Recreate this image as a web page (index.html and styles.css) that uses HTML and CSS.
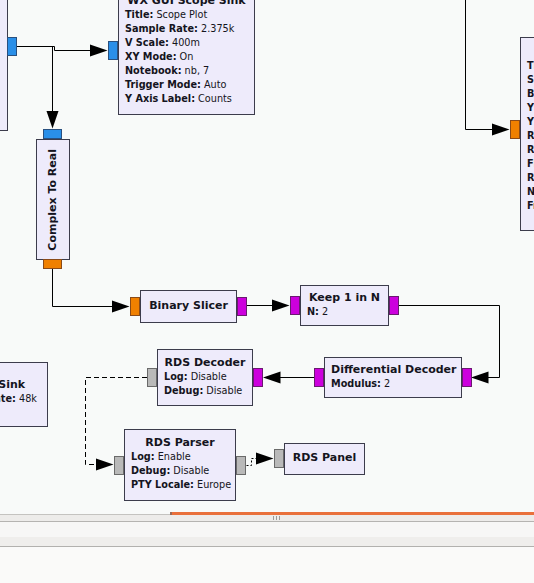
FILE: index.html
```html
<!DOCTYPE html>
<html>
<head>
<meta charset="utf-8">
<link rel="stylesheet" href="styles.css">
</head>
<body>
<div class="canvas">
  <svg class="wires" width="534" height="512" viewBox="0 0 534 512">
    <g fill="none" stroke="#000" stroke-width="1">
      <path d="M17 46.5 H54.5 V50.5 H95"/>
      <path d="M52.5 46.5 V115"/>
      <path d="M52.5 269 V306.5 H115"/>
      <path d="M246 305.5 H275"/>
      <path d="M398 305.5 H499.5 V377.5 H485"/>
      <path d="M314 377.5 H278"/>
      <path d="M465.5 0 V129.5 H495"/>
      <path class="dash" d="M147 377.5 H85.5 V464.5 H99"/>
      <path class="dash2" d="M246.5 465.5 H251.5 V458.5 H258"/>
    </g>
    <g fill="#000">
      <polygon points="90,44.5 90,56.5 107.5,50.5"/>
      <polygon points="46.5,111 58.5,111 52.5,128.5"/>
      <polygon points="112,300.5 112,312.5 129.5,306.5"/>
      <polygon points="272,299.5 272,311.5 289.5,305.5"/>
      <polygon points="488.5,371.5 488.5,383.5 471,377.5"/>
      <polygon points="280.5,371.5 280.5,383.5 263,377.5"/>
      <polygon points="492,123.5 492,135.5 509.5,129.5"/>
      <polygon points="96,458.5 96,470.5 113.5,464.5"/>
      <polygon points="256,452.5 256,464.5 273.5,458.5"/>
    </g>
  </svg>

  <div class="blk b-src"></div>
  <div class="port ph cx p-src-out"></div>

  <div class="blk b-scope">
    <div class="t">WX GUI Scope Sink</div>
    <div class="p"><b>Title:</b> Scope Plot</div>
    <div class="p"><b>Sample Rate:</b> 2.375k</div>
    <div class="p"><b>V Scale:</b> 400m</div>
    <div class="p"><b>XY Mode:</b> On</div>
    <div class="p"><b>Notebook:</b> nb, 7</div>
    <div class="p"><b>Trigger Mode:</b> Auto</div>
    <div class="p"><b>Y Axis Label:</b> Counts</div>
  </div>
  <div class="port ph cx p-scope-in"></div>

  <div class="blk b-c2r"><div class="vt">Complex To Real</div></div>
  <div class="port pv cx p-c2r-in"></div>
  <div class="port pv fl p-c2r-out"></div>

  <div class="blk b-slicer"><div class="t">Binary Slicer</div></div>
  <div class="port ph fl p-slicer-in"></div>
  <div class="port ph by p-slicer-out"></div>

  <div class="blk b-keep">
    <div class="t">Keep 1 in N</div>
    <div class="p"><b>N:</b> 2</div>
  </div>
  <div class="port ph by p-keep-in"></div>
  <div class="port ph by p-keep-out"></div>

  <div class="blk b-diff">
    <div class="t">Differential Decoder</div>
    <div class="p"><b>Modulus:</b> 2</div>
  </div>
  <div class="port ph by p-diff-in"></div>
  <div class="port ph by p-diff-out"></div>

  <div class="blk b-dec">
    <div class="t">RDS Decoder</div>
    <div class="p"><b>Log:</b> Disable</div>
    <div class="p"><b>Debug:</b> Disable</div>
  </div>
  <div class="port ph by p-dec-in"></div>
  <div class="port ph msg p-dec-out"></div>

  <div class="blk b-parser">
    <div class="t">RDS Parser</div>
    <div class="p"><b>Log:</b> Enable</div>
    <div class="p"><b>Debug:</b> Disable</div>
    <div class="p"><b>PTY Locale:</b> Europe</div>
  </div>
  <div class="port ph msg p-parser-in"></div>
  <div class="port ph msg p-parser-out"></div>

  <div class="blk b-panel"><div class="t">RDS Panel</div></div>
  <div class="port ph msg p-panel-in"></div>

  <div class="blk b-sink">
    <div class="t">Audio Sink</div>
    <div class="p"><b>Sample Rate:</b> 48k</div>
  </div>

  <div class="blk b-fft">
    <div class="t">WX GUI FFT Sink</div>
    <div class="p"><b>Title:</b> FFT Plot</div>
    <div class="p"><b>Sample Rate:</b> 48k</div>
    <div class="p"><b>Baseband Freq:</b> 0</div>
    <div class="p"><b>Y per Div:</b> 10 dB</div>
    <div class="p"><b>Y Divs:</b> 10</div>
    <div class="p"><b>Ref Level (dB):</b> 50</div>
    <div class="p"><b>Ref Scale (p2p):</b> 2.0</div>
    <div class="p"><b>FFT Size:</b> 1024</div>
    <div class="p"><b>Refresh Rate:</b> 15</div>
    <div class="p"><b>Notebook:</b> nb, 1</div>
    <div class="p"><b>Freq Set Varname:</b> None</div>
  </div>
  <div class="port ph fl p-fft-in"></div>
</div>

<div class="hscroll">
  <div class="track"></div>
  <div class="thumb"></div>
</div>
<div class="sep">
  <div class="grip"><span></span><span></span><span></span></div>
</div>
<div class="panel-a"></div>
<div class="panel-b"></div>
<div class="rest"></div>
</body>
</html>
```

FILE: styles.css
```css
* { box-sizing: border-box; }
html, body { margin: 0; padding: 0; }
body {
  width: 534px;
  height: 583px;
  overflow: hidden;
  background: #fafaf9;
  font-family: "DejaVu Sans", "Liberation Sans", sans-serif;
}

.canvas {
  position: relative;
  height: 512px;
  overflow: hidden;
  background: #f8faf9;
}
.wires { position: absolute; left: 0; top: 0; }
.dash { stroke-dasharray: 5 3; }
.dash2 { stroke-dasharray: 2 2; }

.blk {
  position: absolute;
  background: #eeebfb;
  border: 1px solid #3c3c4c;
  display: flex;
  flex-direction: column;
  justify-content: center;
  padding: 0 6px 2px;
  font-size: 9.7px;
  line-height: 14px;
  color: #141420;
  white-space: nowrap;
}
.t { font-weight: bold; text-align: center; font-size: 11px; }
.p b { font-weight: bold; }
.vt {
  writing-mode: vertical-rl;
  transform: rotate(180deg);
  font-weight: bold;
  font-size: 11px;
  align-self: center;
}

.b-src { left: -110px; top: -20px; width: 118px; height: 151px; }
.b-scope { left: 118px; top: -13px; width: 137px; height: 128px; }
.b-c2r { left: 36px; top: 139px; width: 34px; height: 121px; padding: 0; align-items: center; }
.b-slicer { left: 140px; top: 290px; width: 97px; height: 33px; }
.b-keep { left: 300px; top: 285px; width: 89px; height: 41px; }
.b-diff { left: 324px; top: 357px; width: 138px; height: 41px; }
.b-dec { left: 157px; top: 349px; width: 96px; height: 57px; }
.b-parser { left: 124px; top: 429px; width: 112px; height: 72px; }
.b-panel { left: 284px; top: 443px; width: 81px; height: 32px; }
.b-sink { left: -64px; top: 362px; width: 112px; height: 65px; justify-content: flex-start; padding-top: 15px; }
.b-fft { left: 520px; top: 37px; width: 170px; height: 194px; justify-content: flex-start; padding-top: 7px; }

.port {
  position: absolute;
  border: 1px solid rgba(40, 30, 40, 0.55);
}
.ph { width: 10px; height: 19px; }
.pv { width: 19px; height: 10px; }
.cx { background: #2a8fe8; }
.fl { background: #f08000; border-color: #8a4a18; }
.by { background: #cc00dd; border-color: #6a1a70; }
.msg { background: #b9b9b9; border-color: #6a6a6a; }

.p-src-out { left: 7px; top: 37px; }
.p-scope-in { left: 108px; top: 41px; }
.p-c2r-in { left: 43px; top: 129px; }
.p-c2r-out { left: 43px; top: 259px; }
.p-slicer-in { left: 130px; top: 297px; }
.p-slicer-out { left: 237px; top: 297px; }
.p-keep-in { left: 290px; top: 296px; }
.p-keep-out { left: 389px; top: 296px; }
.p-diff-in { left: 462px; top: 368px; }
.p-diff-out { left: 314px; top: 368px; }
.p-dec-in { left: 253px; top: 368px; }
.p-dec-out { left: 147px; top: 368px; }
.p-parser-in { left: 114px; top: 456px; }
.p-parser-out { left: 236px; top: 456px; }
.p-panel-in { left: 274px; top: 449px; }
.p-fft-in { left: 510px; top: 120px; }

.hscroll { display: flex; height: 3px; }
.track { width: 170px; box-shadow: inset 0 -1px 0 #c4c3c0; background: #f8faf9; }
.thumb { flex: 1; background: #e9703b; border-left: 2px solid #9a6a58; }

.sep {
  height: 7px;
  background: #edecea;
  border-bottom: 1px solid #b5b4b1;
  position: relative;
}
.grip {
  position: absolute;
  left: 273px;
  top: 1px;
  display: flex;
  gap: 2px;
}
.grip span { width: 1px; height: 4px; background: #9c9b98; }

.panel-a { height: 15px; background: #f7f7f6; }
.panel-b { height: 9px; background: #efeeec; border-bottom: 1px solid #b2b1ae; box-sizing: content-box; }
.rest { height: 40px; background: #fafaf9; }
```
